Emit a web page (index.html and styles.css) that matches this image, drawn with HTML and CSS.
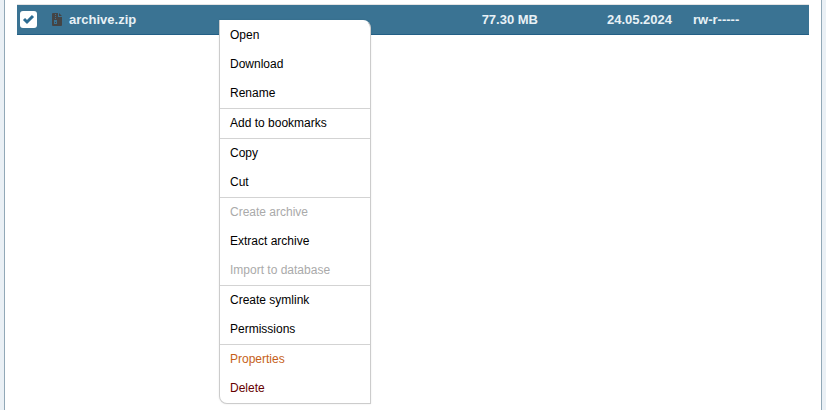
FILE: index.html
```html
<!DOCTYPE html>
<html lang="en">
<head>
  <meta charset="UTF-8">
  <meta name="viewport" content="width=device-width, initial-scale=1.0">
  <title>File manager</title>
  <link rel="stylesheet" href="styles.css">
</head>
<body>
  <main class="panel">
    <table class="files">
      <tbody>
        <tr class="selected">
          <td class="check">
            <input type="checkbox" id="file-1" aria-label="archive.zip" checked>
          </td>
          <td class="icon">
            <svg width="10" height="13" viewBox="0 0 10 13" aria-hidden="true">
              <path fill="#444" d="M1 0h5v4h4v8a1 1 0 0 1-1 1H1a1 1 0 0 1-1-1V1a1 1 0 0 1 1-1zM7 0l3 3H7z"/>
              <path fill="#3a7393" d="M3 1h1v1H3zM3 3h1v1H3zM3 5h1v1H3zM2 7h3v4H2zM3 9v1h1V9z" fill-rule="evenodd"/>
            </svg>
          </td>
          <td class="name"><label for="file-1">archive.zip</label></td>
          <td class="size">77.30 MB</td>
          <td class="date">24.05.2024</td>
          <td class="rights">rw-r-----</td>
        </tr>
      </tbody>
    </table>
  </main>

  <div class="menu">
    <div class="group">
      <button type="button">Open</button>
      <button type="button">Download</button>
      <button type="button">Rename</button>
    </div>
    <div class="group">
      <button type="button">Add to bookmarks</button>
    </div>
    <div class="group">
      <button type="button">Copy</button>
      <button type="button">Cut</button>
    </div>
    <div class="group">
      <button type="button" disabled>Create archive</button>
      <button type="button">Extract archive</button>
      <button type="button" disabled>Import to database</button>
    </div>
    <div class="group">
      <button type="button">Create symlink</button>
      <button type="button">Permissions</button>
    </div>
    <div class="group">
      <button type="button" class="properties">Properties</button>
      <button type="button" class="delete">Delete</button>
    </div>
  </div>
</body>
</html>
```

FILE: styles.css
```css
* {
  box-sizing: border-box;
}

body {
  margin: 0;
  font-family: "Liberation Sans", Arial, sans-serif;
  font-size: 12px;
  background-color: #eaf0f5;
}

.panel {
  min-height: 100vh;
  margin: 0 4px;
  padding: 4px 12px;
  border: solid #91a8b7;
  border-width: 0 1px;
  background-color: #fff;
}

.files {
  width: 100%;
  table-layout: fixed;
  border-collapse: separate;
  border-spacing: 0;
  font-size: 13px;
  font-weight: 700;
}

.files td {
  height: 31px;
  padding: 0;
  border-top: 1px solid #e4e4e4;
  white-space: nowrap;
}

.files .selected td {
  color: #e8f1f6;
  background-color: #3a7393;
  border-bottom: 1px solid #235f85;
}

.files .check {
  width: 35px;
  padding-left: 3px;
}

.files .icon {
  width: 17px;
}

.files .size {
  width: 135px;
  text-align: right;
}

.files .date {
  width: 134px;
  text-align: right;
}

.files .rights {
  width: 137px;
  padding-left: 21px;
}

.icon svg {
  display: block;
}

.check input {
  display: block;
  width: 17px;
  height: 17px;
  margin: 0;
  appearance: none;
  border-radius: 3px;
  background-color: #fff;
}

.check input:checked {
  background: #fff url("data:image/svg+xml,%3Csvg xmlns='http://www.w3.org/2000/svg' viewBox='0 0 17 17'%3E%3Cpath d='M4 8l3 3 6-6' fill='none' stroke='%232c6c92' stroke-width='3'/%3E%3C/svg%3E") center no-repeat;
}

.menu {
  position: absolute;
  top: 20px;
  left: 219px;
  width: 152px;
  border: 1px solid #ccc;
  border-top-color: #fff;
  border-radius: 0 8px 0 8px;
  background-color: #fff;
  overflow: hidden;
  box-shadow: 0 0 2px rgba(0, 0, 0, .1);
}

.group + .group {
  border-top: 1px solid #d3d3d3;
}

.menu button {
  display: block;
  width: 100%;
  height: 29px;
  padding: 0 10px 2px;
  border: 0;
  background: none;
  color: #000;
  font: inherit;
  text-align: left;
}

.menu button:hover {
  background-color: #eaf0f5;
}

.menu button:disabled {
  color: #aaa;
  background: none;
}

.menu .properties {
  color: #c65f1a;
}

.menu .delete {
  color: #600;
}
```
